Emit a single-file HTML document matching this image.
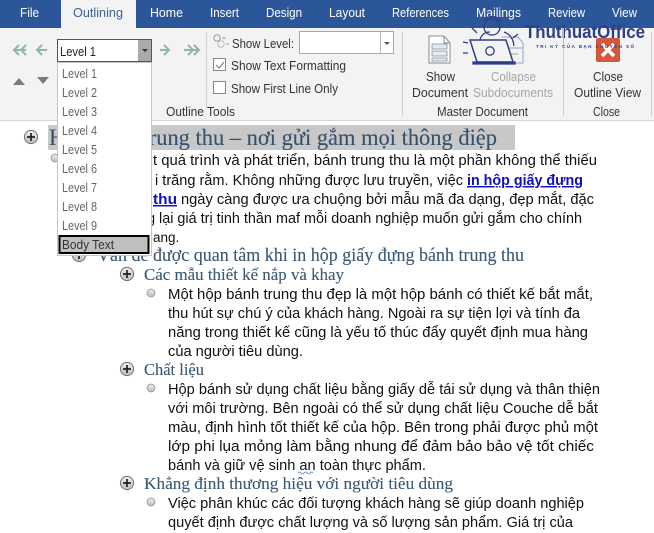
<!DOCTYPE html>
<html><head><meta charset="utf-8"><style>
html,body{margin:0;padding:0;background:#fff;width:654px;height:533px;overflow:hidden}
svg{display:block}
text{white-space:pre}
.r{font-family:"Liberation Sans",sans-serif;font-size:13px;fill:#333}
.t{font-family:"Liberation Sans",sans-serif;font-size:13px;fill:#fff}
.b{font-family:"Liberation Sans",sans-serif;font-size:14.7px;fill:#111}
.h1{font-family:"Liberation Serif",serif;font-size:23px;fill:#36516e;stroke:#36516e;stroke-width:.12px}
.h2{font-family:"Liberation Serif",serif;font-size:18.5px;fill:#3a5875;stroke:#3a5875;stroke-width:.12px}
.h3{font-family:"Liberation Serif",serif;font-size:17px;fill:#3a5875;stroke:#3a5875;stroke-width:.12px}
.l{font-family:"Liberation Sans",sans-serif;font-size:13px;fill:#666}
</style></head><body>
<svg width="654" height="533" viewBox="0 0 654 533" xmlns="http://www.w3.org/2000/svg">
<defs>
<linearGradient id="g" x1="0" y1="0" x2="0" y2="1"><stop offset="0" stop-color="#f0f0f0"/><stop offset="1" stop-color="#bcbcbc"/></linearGradient>
<g id="p"><circle r="6.600" fill="url(#g)" stroke="#6f6f6f" stroke-width="1"/><path d="M-4 0H4M0-4V4" stroke="#222" stroke-width="1.700"/></g>
<g id="d"><circle r="3.900" fill="url(#g)" stroke="#a0a0a0" stroke-width="1"/></g>
</defs>
<rect width="654" height="533" fill="#fff"/>
<rect width="654" height="28" fill="#2b579a"/>
<rect y="28" width="654" height="92" fill="#f3f3f3"/>
<rect y="120" width="654" height="1" fill="#d5d5d5"/>
<rect x="61" width="75" height="28" fill="#f3f3f3"/>
<text class="t" x="20" y="17" textLength="19" lengthAdjust="spacingAndGlyphs">File</text>
<text class="r" x="73" y="17" textLength="50" lengthAdjust="spacingAndGlyphs" style="fill:#3f6193">Outlining</text>
<text class="t" x="150" y="17" textLength="33" lengthAdjust="spacingAndGlyphs">Home</text>
<text class="t" x="210" y="17" textLength="29" lengthAdjust="spacingAndGlyphs">Insert</text>
<text class="t" x="266" y="17" textLength="36" lengthAdjust="spacingAndGlyphs">Design</text>
<text class="t" x="329" y="17" textLength="36" lengthAdjust="spacingAndGlyphs">Layout</text>
<text class="t" x="392" y="17" textLength="57" lengthAdjust="spacingAndGlyphs">References</text>
<text class="t" x="476" y="17" textLength="45" lengthAdjust="spacingAndGlyphs">Mailings</text>
<text class="t" x="548" y="17" textLength="37" lengthAdjust="spacingAndGlyphs">Review</text>
<text class="t" x="612" y="17" textLength="25" lengthAdjust="spacingAndGlyphs">View</text>

<!-- arrows -->
<g fill="none" stroke="#8db8a4" stroke-width="2">
<path d="M19 45l-5 5 5 5M26 45l-5 5 5 5M14 50H26"/>
<path d="M42 45l-5 5 5 5M37 50H47"/>
<path d="M164 45l5 5-5 5M160 50H169"/>
<path d="M188 45l5 5-5 5M194 45l5 5-5 5M184 50H198"/>
</g>
<path d="M13 85l6-7 6 7z" fill="#7a7a7a"/><path d="M37 77h12l-6 7z" fill="#7a7a7a"/>
<!-- level combo -->
<rect x="57.500" y="39.500" width="94" height="22" fill="#fff" stroke="#555"/>
<rect x="138" y="40" width="13" height="21" fill="#aaa"/>
<path d="M142 49h6l-3 3z" fill="#333"/>
<text class="r" x="60" y="56" textLength="36" lengthAdjust="spacingAndGlyphs" style="fill:#222">Level 1</text>

<!-- show level -->
<rect x="206" y="32" width="1" height="76" fill="#d2d2d2"/>
<circle cx="217" cy="38" r="3.200" fill="none" stroke="#999"/><circle cx="221" cy="44" r="3.200" fill="none" stroke="#bbb"/>
<path d="M222 38h4M226 44h3" stroke="#999"/>
<text class="r" x="232" y="48" textLength="62" lengthAdjust="spacingAndGlyphs">Show Level:</text>
<rect x="299.500" y="31.500" width="94" height="22" fill="#fff" stroke="#aaa"/>
<path d="M380.500 32v21" stroke="#bbb"/><path d="M384 42h6l-3 3z" fill="#555"/>
<rect x="213.500" y="58.500" width="12" height="12" fill="#fff" stroke="#888"/>
<path d="M216 65l3 3 5-6" fill="none" stroke="#777"/>
<text class="r" x="231" y="70" textLength="115" lengthAdjust="spacingAndGlyphs">Show Text Formatting</text>
<rect x="213.500" y="81.500" width="12" height="12" fill="#fff" stroke="#888"/>
<text class="r" x="231" y="93" textLength="107" lengthAdjust="spacingAndGlyphs">Show First Line Only</text>
<text class="r" x="166" y="116" textLength="69" lengthAdjust="spacingAndGlyphs">Outline Tools</text>
<rect x="402" y="32" width="1" height="84" fill="#cfcfcf"/>
<rect x="563" y="44" width="1" height="72" fill="#cfcfcf"/>
<rect x="651" y="32" width="1" height="84" fill="#cfcfcf"/>

<!-- show document icon -->
<path d="M429 36h15l6 7v20h-21z" fill="#fff" stroke="#8a8a8a"/><path d="M444 36v7h6" fill="none" stroke="#8a8a8a"/>
<path d="M432 44h15v5h-15zM432 51h15v5h-15zM432 58h15v3h-15z" fill="#e6eaee" stroke="#7e8e9e" stroke-width=".8"/>
<text class="r" x="426" y="81" textLength="29" lengthAdjust="spacingAndGlyphs">Show</text>
<text class="r" x="412" y="97" textLength="56" lengthAdjust="spacingAndGlyphs">Document</text>
<text class="r" x="491" y="81" textLength="45" lengthAdjust="spacingAndGlyphs" style="fill:#a6a6a6">Collapse</text>
<text class="r" x="473" y="97" textLength="80" lengthAdjust="spacingAndGlyphs" style="fill:#a6a6a6">Subdocuments</text>
<text class="r" x="437" y="116" textLength="91" lengthAdjust="spacingAndGlyphs">Master Document</text>
<!-- close -->
<rect x="596" y="38" width="24" height="24" rx="2" fill="#d2593a"/>
<path d="M602 44l12 12M614 44l-12 12" stroke="#fff" stroke-width="3.600"/>
<text class="r" x="593" y="81" textLength="30" lengthAdjust="spacingAndGlyphs">Close</text>
<text class="r" x="574" y="97" textLength="67" lengthAdjust="spacingAndGlyphs">Outline View</text>
<text class="r" x="593" y="116" textLength="27" lengthAdjust="spacingAndGlyphs">Close</text>

<!-- watermark -->
<g fill="none" stroke="#2e3f86" stroke-width="1.300">
<path d="M502 37h16l5 6v20h-21M504 48h19M504 54h14" stroke="#9aa2bf" stroke-width="1"/>
<path d="M470 40h36l7 22h-36z" stroke-width="1.500" fill="#f3f3f3"/>
<path d="M473 62h42v2h-42z" fill="#2e3f86"/>
<circle cx="490" cy="51" r="4.200"/>
<circle cx="492" cy="27" r="8"/>
<path d="M483 21q9-9 18 0M480 40q2-8 10-8M504 32q9 3 10 14"/>
<path d="M472 28l5 5M463 42l5 1M463 53h5M518 34l-5 4"/>
</g>
<text x="525" y="38" font-family="Liberation Sans,sans-serif" font-weight="700" font-size="18" fill="#2e3f86" textLength="120" lengthAdjust="spacingAndGlyphs">ThuthuatOffice</text>
<text x="536" y="48" font-family="Liberation Sans,sans-serif" font-weight="700" font-size="4.500" fill="#2e3f86" textLength="98" lengthAdjust="spacing">TRI KỶ CỦA BẠN CHUYỂN SỐ</text>
<rect x="563" y="28" width="1" height="16" fill="#b5b8c5"/>

<!-- document -->
<rect x="48" y="125" width="467" height="25" fill="#c8c8c8"/>
<use href="#p" x="31" y="137"/>
<text class="h1" x="49" y="145" textLength="448" lengthAdjust="spacingAndGlyphs">Hộp bánh trung thu – nơi gửi gắm mọi thông điệp</text>
<use href="#d" x="55" y="158"/>
<text class="b" x="73" y="165" textLength="76" lengthAdjust="spacingAndGlyphs">Trải qua mộ</text>
<text class="b" x="153" y="165" textLength="444" lengthAdjust="spacingAndGlyphs">t quá trình và phát triển, bánh trung thu là một phần không thể thiếu</text>
<text class="b" x="100" y="185" textLength="50" lengthAdjust="spacingAndGlyphs">mỗi đêm</text>
<text class="b" x="155" y="185" textLength="308" lengthAdjust="spacingAndGlyphs">i trăng rằm. Không những được lưu truyền, việc</text>
<text class="b" x="467" y="185" textLength="116" lengthAdjust="spacingAndGlyphs" font-weight="700" text-decoration="underline" style="fill:#1010c0">in hộp giấy đựng</text>
<text class="b" x="73" y="204" font-weight="700" text-decoration="underline" style="fill:#1010c0">bánh trung</text>
<text class="b" x="153" y="204" textLength="24" lengthAdjust="spacingAndGlyphs" font-weight="700" text-decoration="underline" style="fill:#1010c0">thu</text>
<text class="b" x="181" y="204" textLength="413" lengthAdjust="spacingAndGlyphs">ngày càng được ưa chuộng bởi mẫu mã đa dạng, đẹp mắt, đặc</text>
<text class="b" x="96" y="223" textLength="59" lengthAdjust="spacingAndGlyphs">sắc, mang</text>
<text class="b" x="159" y="223" textLength="423" lengthAdjust="spacingAndGlyphs">lại giá trị tinh thần maf mỗi doanh nghiệp muốn gửi gắm cho chính</text>
<text class="b" x="153" y="242" style="font-size:13.5px">ang.</text>
<use href="#p" x="79" y="255"/>
<text class="h2" x="97" y="261" textLength="427" lengthAdjust="spacingAndGlyphs">Vấn đề được quan tâm khi in hộp giấy đựng bánh trung thu</text>
<use href="#p" x="127" y="274"/>
<text class="h3" x="144" y="280" textLength="200" lengthAdjust="spacingAndGlyphs">Các mẫu thiết kế nắp và khay</text>
<use href="#d" x="151" y="293"/>
<text class="b" x="168" y="299" textLength="425" lengthAdjust="spacingAndGlyphs">Một hộp bánh trung thu đẹp là một hộp bánh có thiết kế bắt mắt,</text>
<text class="b" x="168" y="318" textLength="412" lengthAdjust="spacingAndGlyphs">thu hút sự chú ý của khách hàng. Ngoài ra sự tiện lợi và tính đa</text>
<text class="b" x="168" y="337" textLength="420" lengthAdjust="spacingAndGlyphs">năng trong thiết kế cũng là yếu tố thúc đẩy quyết định mua hàng</text>
<text class="b" x="168" y="356" textLength="135" lengthAdjust="spacingAndGlyphs">của người tiêu dùng.</text>
<use href="#p" x="127" y="369"/>
<text class="h3" x="144" y="375" textLength="60" lengthAdjust="spacingAndGlyphs">Chất liệu</text>
<use href="#d" x="151" y="388"/>
<text class="b" x="168" y="394" textLength="432" lengthAdjust="spacingAndGlyphs">Hộp bánh sử dụng chất liệu bằng giấy dễ tái sử dụng và thân thiện</text>
<text class="b" x="168" y="413" textLength="430" lengthAdjust="spacingAndGlyphs">với môi trường. Bên ngoài có thể sử dụng chất liệu Couche dễ bắt</text>
<text class="b" x="168" y="432" textLength="430" lengthAdjust="spacingAndGlyphs">màu, định hình tốt thiết kế của hộp. Bên trong phải được phủ một</text>
<text class="b" x="168" y="451" textLength="426" lengthAdjust="spacingAndGlyphs">lớp phi lụa mỏng làm bằng nhung để đảm bảo bảo vệ tốt chiếc</text>
<text class="b" x="168" y="470" textLength="258" lengthAdjust="spacingAndGlyphs">bánh và giữ vệ sinh an toàn thực phẩm.</text>
<path d="M298 473q1.500-2 3 0t3 0 3 0 3 0 3 0" fill="none" stroke="#5b7fc0" stroke-width=".8"/>
<use href="#p" x="127" y="483"/>
<text class="h3" x="144" y="489" textLength="309" lengthAdjust="spacingAndGlyphs">Khẳng định thương hiệu với người tiêu dùng</text>
<use href="#d" x="151" y="502"/>
<text class="b" x="168" y="508" textLength="416" lengthAdjust="spacingAndGlyphs">Việc phân khúc các đối tượng khách hàng sẽ giúp doanh nghiệp</text>
<text class="b" x="168" y="527" textLength="405" lengthAdjust="spacingAndGlyphs">quyết định được chất lượng và số lượng sản phẩm. Giá trị của</text>

<!-- dropdown -->
<rect x="57.500" y="62.500" width="94" height="193" fill="#fff" stroke="#c6c6c6"/>
<text class="l" x="62" y="78" textLength="35" lengthAdjust="spacingAndGlyphs">Level 1</text>
<text class="l" x="62" y="97" textLength="35" lengthAdjust="spacingAndGlyphs">Level 2</text>
<text class="l" x="62" y="116" textLength="35" lengthAdjust="spacingAndGlyphs">Level 3</text>
<text class="l" x="62" y="135" textLength="35" lengthAdjust="spacingAndGlyphs">Level 4</text>
<text class="l" x="62" y="154" textLength="35" lengthAdjust="spacingAndGlyphs">Level 5</text>
<text class="l" x="62" y="173" textLength="35" lengthAdjust="spacingAndGlyphs">Level 6</text>
<text class="l" x="62" y="192" textLength="35" lengthAdjust="spacingAndGlyphs">Level 7</text>
<text class="l" x="62" y="211" textLength="35" lengthAdjust="spacingAndGlyphs">Level 8</text>
<text class="l" x="62" y="230" textLength="35" lengthAdjust="spacingAndGlyphs">Level 9</text>
<rect x="59.500" y="236" width="89" height="17" fill="#c0c0c0" stroke="#000" stroke-width="2"/>
<text class="r" x="62" y="249" textLength="52" lengthAdjust="spacingAndGlyphs" style="fill:#333">Body Text</text>
</svg>
</body></html>
